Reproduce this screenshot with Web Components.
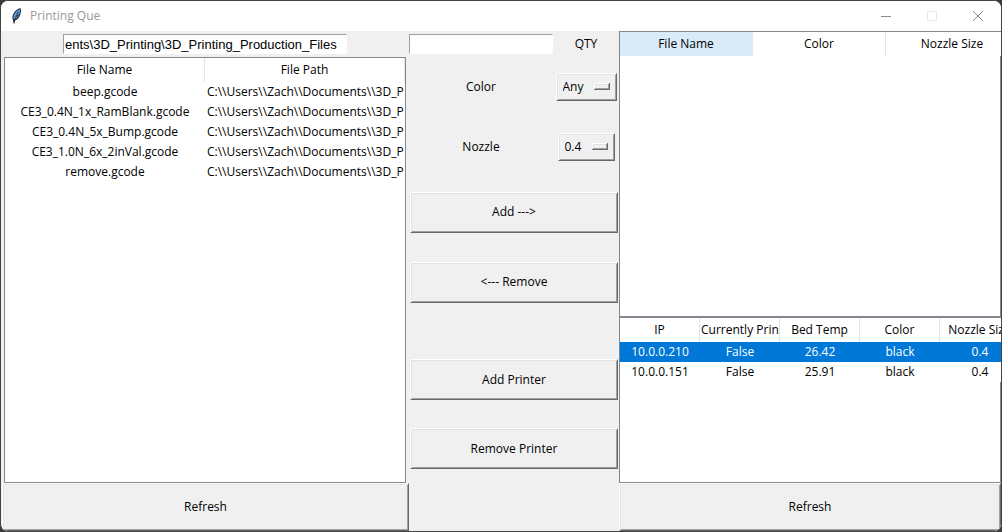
<!DOCTYPE html>
<html lang="en">
<head>
<meta charset="utf-8">
<title>Printing Que</title>
<style>
  body {
    margin: 0;
    background: #3a3a3c;
    font-family: "Open Sans", "Noto Sans", sans-serif;
    font-size: 12px;
    line-height: 20px;
    color: #000;
    --face: #f0f0f0;
    --light: #e3e3e3;
    --shade: #a0a0a0;
    --dark: #696969;
    --frame: #828790;
    --select: #0078d7;
    --hover: #d9ebf9;
  }
</style>
</head>
<body>
<app-window>
  <span slot="title">Printing Que</span>
  <file-pane></file-pane>
  <control-pane></control-pane>
  <queue-pane></queue-pane>
</app-window>

<script>
  class BaseElement extends HTMLElement {
    constructor() {
      super();
      const template = document.createElement('template');
      template.innerHTML = '<style>*{box-sizing:border-box}</style>' + this.constructor.markup;
      this.attachShadow({ mode: 'open' }).append(template.content.cloneNode(true));
    }
  }

  // Raised push button
  class TkButton extends BaseElement {
    static markup = `
      <style>
        :host { display: grid; }
        button {
          font: inherit; color: inherit; background: var(--face);
          padding: 0; border: 1px solid; border-radius: 0;
          border-color: #fff var(--dark) var(--dark) #fff;
          box-shadow: inset 1px 1px var(--light), inset -1px -1px var(--shade);
        }
      </style>
      <button type="button"><slot></slot></button>`;
  }

  // Sunken single-line text box, with an optional caption on its right
  class TkEntry extends BaseElement {
    static markup = `
      <style>
        :host { display: grid; align-items: center; }
        :host([captioned]) { grid-template-columns: minmax(0, 24fr) minmax(0, 11fr); }
        label { text-align: center; }
        :host(:not([captioned])) label { display: none; }
        input {
          font: 13px/16px "Liberation Sans", Arial, sans-serif; color: #000;
          width: 100%; min-width: 0; height: 20px; padding: 0 1px;
          border: 1px solid; border-color: var(--shade) #fff #fff var(--shade);
          border-radius: 0; background: #fff; outline: none;
        }
      </style>
      <input id="field" type="text"><label for="field"><slot></slot></label>`;
    connectedCallback() {
      const input = this.shadowRoot.querySelector('input');
      input.value = this.getAttribute('value') || '';
      if (this.hasAttribute('label')) input.setAttribute('aria-label', this.getAttribute('label'));
    }
  }

  // Caption and drop-down in a row
  class TkOption extends BaseElement {
    static markup = `
      <style>
        :host { display: grid; grid-template-columns: minmax(0, 24fr) minmax(0, 11fr); align-items: center; justify-items: center; }
        .menu { display: grid; align-items: center; }
        select, svg { grid-area: 1 / 1; }
        select {
          appearance: none; font: inherit; color: inherit; background: var(--face);
          height: 28px; padding: 0 32px 0 6px; border: 1px solid; border-radius: 0;
          border-color: #fff var(--dark) var(--dark) #fff;
          box-shadow: inset 1px 1px var(--light), inset -1px -1px var(--shade);
        }
        svg { justify-self: end; margin-right: 7px; pointer-events: none; }
      </style>
      <label for="choice"><slot></slot></label>
      <div class="menu">
        <select id="choice"></select>
        <svg width="16" height="8" viewBox="0 0 16 8" shape-rendering="crispEdges" aria-hidden="true">
          <path fill="#696969" d="M0 6h15V0h1v7H0z"/>
          <path fill="#a0a0a0" d="M1 5h13V1h1v5H1z"/>
          <path fill="#fff" d="M0 0h15v1H1v5H0z"/>
          <path fill="#e3e3e3" d="M1 1h13v1H2v3H1z"/>
        </svg>
      </div>`;
    connectedCallback() {
      const select = this.shadowRoot.querySelector('select');
      for (const text of this.getAttribute('options').split('|')) select.add(new Option(text));
    }
  }

  // Table with a heading row; wider tables run past the frame and are cut off
  class TkTree extends BaseElement {
    static markup = `
      <style>
        :host {
          display: block; overflow: hidden; padding: 1px 0 0 1px; background: #fff;
          box-shadow: inset 0 0 0 1px var(--frame);
        }
        table { table-layout: fixed; border-collapse: separate; border-spacing: 0; background: #fff; }
        th, td {
          padding: 0 2px; text-align: center; font-weight: normal;
          white-space: pre; overflow: hidden; height: 20px;
        }
        th { height: 24px; border-right: 1px solid #e5e5e5; padding: 0 1px; }
        th.hover { background: var(--hover); border-color: var(--hover); }
        tr.selected td { background: var(--select); color: #fff; }
      </style>
      <table><thead><tr></tr></thead><tbody></tbody></table>`;
    connectedCallback() {
      const root = this.shadowRoot;
      const columns = this.getAttribute('columns').split('|');
      const width = Number(this.getAttribute('column-width'));
      root.querySelector('table').style.width = columns.length * width + 'px';
      columns.forEach((name, i) => {
        const th = document.createElement('th');
        th.scope = 'col';
        th.textContent = name;
        if (this.getAttribute('hover') === String(i)) th.className = 'hover';
        root.querySelector('thead tr').append(th);
      });
      this.rows.forEach((row, i) => {
        const tr = root.querySelector('tbody').insertRow();
        if (this.getAttribute('selected') === String(i)) tr.className = 'selected';
        for (const text of row) tr.insertCell().textContent = text;
      });
    }
    get rows() {
      return TkTree.data[this.getAttribute('source')] || [];
    }
    static data = {
      files: ['beep.gcode', 'CE3_0.4N_1x_RamBlank.gcode', 'CE3_0.4N_5x_Bump.gcode',
              'CE3_1.0N_6x_2inVal.gcode', 'remove.gcode']
        .map(name => [name, String.raw`C:\\Users\\Zach\\Documents\\3D_P`]),
      printers: [
        ['10.0.0.210', 'False', '26.42', 'black', '0.4'],
        ['10.0.0.151', 'False', '25.91', 'black', '0.4']
      ]
    };
  }

  class FilePane extends BaseElement {
    static markup = `
      <style>
        :host { display: grid; grid-template-rows: 26px minmax(0, 1fr) 48px; }
        tk-entry { width: 284px; justify-self: center; align-self: center; }
        tk-tree { margin: 0 3px; }
        tk-button { margin-left: 1px; }
      </style>
      <tk-entry label="Folder" value="ents\\3D_Printing\\3D_Printing_Production_Files"></tk-entry>
      <tk-tree source="files" columns="File Name|File Path" column-width="200"></tk-tree>
      <tk-button>Refresh</tk-button>`;
  }

  class ControlPane extends BaseElement {
    static markup = `
      <style>
        :host {
          display: grid;
          grid-template-rows: 26px 60fr 60fr 70fr 70fr 28fr 69fr 69fr 48px;
        }
        tk-button { height: 41px; margin: 0 1px; align-self: center; }
        .add-printer { grid-row: 7; }
        .remove-printer { grid-row: 8; }
      </style>
      <tk-entry captioned>QTY</tk-entry>
      <tk-option options="Any">Color</tk-option>
      <tk-option options="0.4">Nozzle</tk-option>
      <tk-button>Add ---&gt;</tk-button>
      <tk-button>&lt;--- Remove</tk-button>
      <tk-button class="add-printer">Add Printer</tk-button>
      <tk-button class="remove-printer">Remove Printer</tk-button>`;
  }

  class QueuePane extends BaseElement {
    static markup = `
      <style>
        :host { display: grid; grid-template-rows: minmax(0, 286fr) minmax(0, 166fr) 48px; }
      </style>
      <tk-tree columns="File Name|Color|Nozzle Size" column-width="133" hover="0"></tk-tree>
      <tk-tree source="printers" columns="IP|Currently Prin|Bed Temp|Color|Nozzle Size" column-width="80" selected="0"></tk-tree>
      <tk-button>Refresh</tk-button>`;
  }

  class AppWindow extends BaseElement {
    static markup = `
      <style>
        :host {
          display: grid; grid-template-rows: 30px minmax(0, 1fr); height: 100vh;
          border: 1px solid #444; border-radius: 8px; overflow: hidden;
          background: var(--face); box-sizing: border-box;
        }
        header { display: flex; align-items: center; background: #fff; color: #999; }
        .feather { margin: 0 8px 0 10px; }
        h1 { margin: 0; flex: 1; font: inherit; }
        nav { display: flex; align-self: stretch; }
        nav button { width: 46px; padding: 0; border: 0; background: none; display: grid; place-items: center; }
        main { display: grid; grid-template-columns: minmax(0, 408fr) minmax(0, 210fr) minmax(0, 382fr); }
      </style>
      <header>
        <svg class="feather" width="11" height="16" viewBox="0 0 11 16" aria-hidden="true">
          <path fill="#18222e" d="M9.500 0C6 .8 3 3.600 1.800 7.200 1.200 9 1.300 10.800 2 12l.6 3.600h.9L4 12.500c2.600-.6 4.400-3.300 5.200-5.700C10 4.300 10.300 1.800 9.500 0z"/>
          <path fill="#5b9bdc" d="M8.900 1C6.200 2 3.600 4.700 2.700 7.600c-.4 1.400-.4 2.500-.1 3.400L3.400 11.400c2.500-.5 4.100-2.800 5-5.400.6-1.800.8-3.500.5-5z"/>
          <path fill="none" stroke="#18222e" stroke-width=".8" d="M7.300 3.500 3 13.500M8.600 6.500 5.500 8.500"/>
        </svg>
        <h1><slot name="title"></slot></h1>
        <nav>
          <button type="button" aria-label="Minimize"><svg width="10" height="10" viewBox="0 0 10 10"><path stroke="#8b8b8b" d="M0 5.500h10"/></svg></button>
          <button type="button" aria-label="Maximize" disabled><svg width="10" height="10" viewBox="0 0 10 10"><rect x=".5" y=".5" width="9" height="9" rx="1" fill="none" stroke="#e6e6e6"/></svg></button>
          <button type="button" aria-label="Close"><svg width="10" height="10" viewBox="0 0 10 10"><path stroke="#8b8b8b" d="M0 0l10 10M10 0 0 10"/></svg></button>
        </nav>
      </header>
      <main><slot></slot></main>`;
  }

  customElements.define('tk-button', TkButton);
  customElements.define('tk-entry', TkEntry);
  customElements.define('tk-option', TkOption);
  customElements.define('tk-tree', TkTree);
  customElements.define('file-pane', FilePane);
  customElements.define('control-pane', ControlPane);
  customElements.define('queue-pane', QueuePane);
  customElements.define('app-window', AppWindow);
</script>
</body>
</html>
